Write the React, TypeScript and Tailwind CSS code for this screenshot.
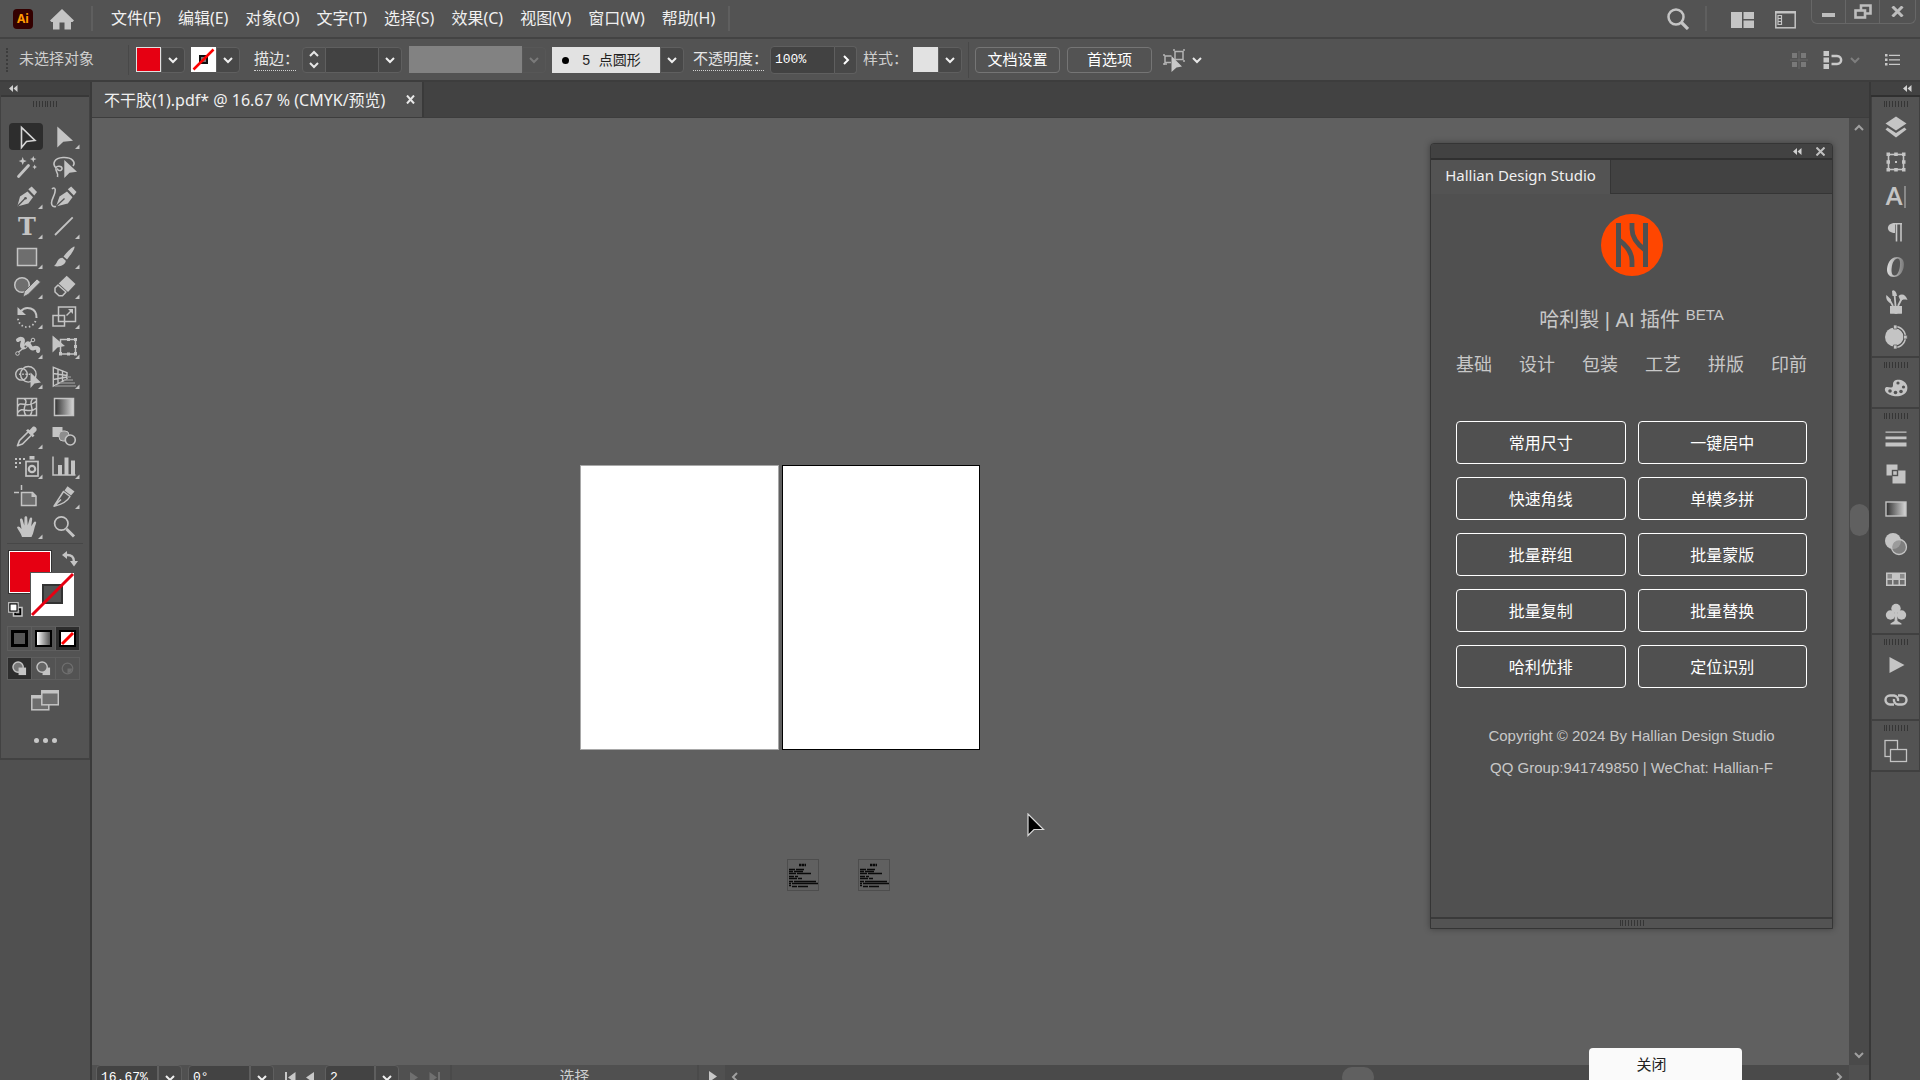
import type { ReactNode } from "react";
import { clsx } from "clsx";

// --- Fonts ---
const UI_FONT = "font-['Noto_Sans','Noto_Sans_CJK_SC',sans-serif]";
const SONG_FONT = "font-['Liberation_Mono','Noto_Sans_CJK_SC',monospace]";
const PLUGIN_FONT = "font-['Liberation_Sans','Noto_Sans_CJK_SC',sans-serif]";

// --- Types ---
type Tool = {
  name: string;
  icon: ReactNode;
  flyout?: boolean;
};

type DockItem = {
  name: string;
  icon: ReactNode;
};

// --- Data ---
const menus = [
  "文件(F)",
  "编辑(E)",
  "对象(O)",
  "文字(T)",
  "选择(S)",
  "效果(C)",
  "视图(V)",
  "窗口(W)",
  "帮助(H)",
];

const pluginTabs = ["基础", "设计", "包装", "工艺", "拼版", "印前"];

const pluginActions = [
  "常用尺寸",
  "一键居中",
  "快速角线",
  "单模多拼",
  "批量群组",
  "批量蒙版",
  "批量复制",
  "批量替换",
  "哈利优排",
  "定位识别",
];

// Tool glyphs are drawn on a 34x27 cell
const tools: Tool[] = [
  {
    name: "选择工具",
    icon: (
      <path d="M12.5 4.5V24.5L17.5 18.5L26 17.5Z" fill="none" stroke="#d6d6d6" strokeWidth="1.6" />
    ),
  },
  {
    name: "直接选择工具",
    flyout: true,
    icon: <path d="M11.3 3.5V24.5L17.3 18.7L27 17.7Z" />,
  },
  {
    name: "魔棒工具",
    icon: (
      <>
        <path d="M9.5 23.5L19.5 12.5" stroke="#c4c4c4" strokeWidth="2.8" strokeLinecap="round" />
        <path d="M13.7 4L14.8 7L17.7 8L14.8 9.200L13.7 12L12.600 9.200L9.700 8L12.600 7Z" />
        <path d="M24.300 3L25.200 5.200L27.500 6L25.200 7L24.300 9.500L23.300 7L21 6L23.300 5.200Z" />
        <path d="M25.700 11.500L26.400 13.300L28 14L26.400 14.800L25.700 16.500L24.900 14.800L23.300 14L24.900 13.300Z" />
      </>
    ),
  },
  {
    name: "套索工具",
    icon: (
      <>
        <path
          d="M10 15C6 11 8 5 17 4.500C26 4 30 9 27 13M10 15C10 12.500 16 12.500 16 15.500C16 18.500 10.500 18 12 15.500M10 15C9 20 13 19 11.500 24"
          fill="none"
          stroke="#c4c4c4"
          strokeWidth="1.6"
        />
        <path d="M18.300 7V25L23.500 19.800L31 18.800Z" />
      </>
    ),
  },
  {
    name: "钢笔工具",
    flyout: true,
    icon: (
      <>
        <path d="M8.300 23.500L11 13.500L18.500 8.500L24 14.300L19.300 20.500Z" />
        <path d="M19.300 6.300L22.700 3.500L28 9L25.300 12.500Z" />
        <path d="M8.300 23.500L16 15.500" stroke="#535353" strokeWidth="1.300" />
        <circle cx="16.500" cy="15.200" r="1.300" fill="#535353" />
      </>
    ),
  },
  {
    name: "曲率工具",
    icon: (
      <>
        <path d="M10 23.500L13.500 13.500L21 8.500L26.500 14.300L21.800 20.500Z" />
        <path d="M21.800 6.300L25.200 3.500L30.500 9L27.800 12.500Z" />
        <path d="M10 23.500L18.500 15.500" stroke="#535353" strokeWidth="1.300" />
        <path
          d="M6 6C8 4 10 5 9 9C8.500 13 5.500 16 5.500 20C5.500 23 7.500 24 10 23.500"
          fill="none"
          stroke="#c4c4c4"
          strokeWidth="1.600"
        />
      </>
    ),
  },
  {
    name: "文字工具",
    flyout: true,
    icon: (
      <text x="18" y="22" textAnchor="middle" className="font-['DejaVu_Serif',serif] text-2xl font-bold">
        T
      </text>
    ),
  },
  {
    name: "直线段工具",
    flyout: true,
    icon: <path d="M9 22L26.700 4.300" stroke="#c4c4c4" strokeWidth="1.800" />,
  },
  {
    name: "矩形工具",
    flyout: true,
    icon: <rect x="8.500" y="5.500" width="19" height="17" fill="#6e6e6e" stroke="#c4c4c4" strokeWidth="1.500" />,
  },
  {
    name: "画笔工具",
    flyout: true,
    icon: (
      <>
        <path d="M28.500 3.500C29 4.500 27 9 21 16.500L17.500 13.500C22 8 26 4 28.500 3.500Z" />
        <path d="M16.500 14.700L19.800 17.700C19.500 21.500 14 24.500 8 23C11.500 20.500 11 15 16.500 14.700Z" />
      </>
    ),
  },
  {
    name: "Shaper 工具",
    flyout: true,
    icon: (
      <>
        <circle cx="13" cy="12" r="7.300" fill="#6e6e6e" stroke="#c4c4c4" strokeWidth="1.500" />
        <path d="M14 24L15.500 18.500L28 6L31.500 9L19 21.500Z" stroke="#535353" strokeWidth="0.800" />
      </>
    ),
  },
  {
    name: "橡皮擦工具",
    flyout: true,
    icon: (
      <>
        <path d="M20.700 2.700L29.500 11L22 19L12.700 10.500Z" />
        <path
          d="M12 12L20 19L16.500 22.700H13L9 19V15Z"
          fill="none"
          stroke="#c4c4c4"
          strokeWidth="1.500"
          strokeLinejoin="round"
        />
      </>
    ),
  },
  {
    name: "旋转工具",
    flyout: true,
    icon: (
      <>
        <path d="M11.500 8.500C17 2 28 5 27.500 15" fill="none" stroke="#c4c4c4" strokeWidth="2" />
        <path d="M8.500 4V12H17Z" />
        <path
          d="M26.500 18A9 9 0 0 1 9 15"
          fill="none"
          stroke="#c4c4c4"
          strokeWidth="1.800"
          strokeDasharray="1.500 2.300"
        />
      </>
    ),
  },
  {
    name: "比例缩放工具",
    flyout: true,
    icon: (
      <>
        <rect x="12.500" y="4" width="17" height="14.500" fill="none" stroke="#c4c4c4" strokeWidth="1.500" />
        <rect x="7" y="12.500" width="11.500" height="10.500" fill="none" stroke="#c4c4c4" strokeWidth="1.500" />
        <path d="M20.500 12.500L25 8" stroke="#c4c4c4" strokeWidth="1.500" />
        <path d="M22 6H27V11Z" />
      </>
    ),
  },
  {
    name: "变形工具",
    flyout: true,
    icon: (
      <>
        <path
          d="M9 7C12 4.500 15 6 13.500 10C11.500 15 15.500 16 17.500 11.500C20 7 20.500 16 24 15.500C27.500 14 30 15 29 18"
          fill="none"
          stroke="#c4c4c4"
          strokeWidth="4"
          strokeLinecap="round"
        />
        <path d="M8.500 20L24 7" stroke="#c4c4c4" strokeWidth="1.300" />
        <circle cx="8.500" cy="20.500" r="1.800" fill="#535353" stroke="#c4c4c4" />
        <circle cx="24" cy="7" r="1.800" fill="#535353" stroke="#c4c4c4" />
        <circle cx="16.500" cy="13.500" r="1.500" fill="#535353" stroke="#c4c4c4" />
      </>
    ),
  },
  {
    name: "自由变换工具",
    flyout: true,
    icon: (
      <>
        <rect x="14.500" y="6.500" width="15" height="14.500" fill="none" stroke="#c4c4c4" strokeWidth="1.500" />
        <path d="M13 19H16V22.500H13ZM28 19H31V22.500H28ZM28 5H31V8H28ZM21 5H24V8H21ZM21 19.500H24V22.500H21ZM28 12H31V15H28Z" />
        <path d="M6.500 2.500V19.500L11.500 14.500L19 13Z" />
      </>
    ),
  },
  {
    name: "形状生成器工具",
    flyout: true,
    icon: (
      <>
        <circle cx="12.500" cy="11.300" r="5.800" fill="none" stroke="#c4c4c4" strokeWidth="1.400" />
        <circle cx="19.300" cy="11.300" r="7.800" fill="none" stroke="#c4c4c4" strokeWidth="1.400" />
        <path d="M10 11.300H23" stroke="#c4c4c4" strokeWidth="1.600" strokeDasharray="1.600 1.600" />
        <path d="M21.500 9.500V25L25.500 20.500L32 19.500Z" />
      </>
    ),
  },
  {
    name: "透视网格工具",
    flyout: true,
    icon: (
      <>
        <path
          d="M7.300 4.300V23L21 16V9.700ZM12 6V20.500M16.500 8V18M7.300 10.500L21 12.500M7.300 16.500L21 14"
          fill="none"
          stroke="#c4c4c4"
          strokeWidth="1.400"
        />
        <path d="M21 14H25M18 17H27M14 20H29M9 23H30" stroke="#8d8d8d" strokeWidth="1.500" />
      </>
    ),
  },
  {
    name: "网格工具",
    icon: (
      <path
        d="M8.500 5.500H27.500V22.500H8.500ZM15 5.500C21 9 11 15 17 22.500M24 5.500C18 11 27 15 21 22.500M8.500 14C11 6 18 17 27.500 8M8.500 20C13 12 20 22 27.500 15"
        fill="none"
        stroke="#c4c4c4"
        strokeWidth="1.500"
      />
    ),
  },
  {
    name: "渐变工具",
    icon: (
      <>
        <defs>
          <linearGradient id="toolGradient">
            <stop offset="0" stopColor="#2f2f2f" />
            <stop offset="1" stopColor="#d8d8d8" />
          </linearGradient>
        </defs>
        <rect x="8.500" y="5.500" width="19" height="17" fill="url(#toolGradient)" stroke="#c4c4c4" strokeWidth="1.500" />
      </>
    ),
  },
  {
    name: "吸管工具",
    flyout: true,
    icon: (
      <>
        <path
          d="M19 9L10.500 17.500L8.500 22.700L13.500 21L22 12.500"
          fill="none"
          stroke="#c4c4c4"
          strokeWidth="1.700"
          strokeLinejoin="round"
        />
        <path d="M17 7.500L19 6L20.500 7.200L23.500 4C25.500 2.500 29 5.500 27.200 8L24 11L25.500 12.500L23.700 14.300Z" />
      </>
    ),
  },
  {
    name: "混合工具",
    icon: (
      <>
        <rect x="6.500" y="4" width="10" height="10" />
        <rect x="13" y="8" width="10" height="10" rx="4" fill="#8d8d8d" stroke="#c4c4c4" />
        <circle cx="24.300" cy="17" r="5" fill="#535353" stroke="#c4c4c4" strokeWidth="1.600" />
      </>
    ),
  },
  {
    name: "符号喷枪工具",
    flyout: true,
    icon: (
      <>
        <path d="M6 5H8V7H6ZM10 5H12V7H10ZM14 5H16V7H14ZM6 9H8V11H6ZM10 9H12V11H10ZM6 13H8V15H6ZM20.500 3H25.500V6.500H20.500Z" />
        <rect x="17" y="8.500" width="12" height="14.500" fill="none" stroke="#c4c4c4" strokeWidth="1.700" />
        <circle cx="23" cy="16" r="3.200" fill="none" stroke="#c4c4c4" strokeWidth="2.200" />
      </>
    ),
  },
  {
    name: "柱形图工具",
    flyout: true,
    icon: (
      <>
        <path d="M7 3.500V22H29.500" fill="none" stroke="#c4c4c4" strokeWidth="1.500" />
        <path d="M12 12H16V22H12ZM18.500 4.500H22.500V22H18.500ZM25 7.500H29V22H25Z" />
      </>
    ),
  },
  {
    name: "画板工具",
    icon: (
      <>
        <path d="M12.500 9.500H23.500L27 13V22.500H12.500Z" fill="#6e6e6e" stroke="#c4c4c4" strokeWidth="1.500" />
        <path d="M22.500 9V14H27.500Z" />
        <path d="M5 9.500H10M12.500 2V7" stroke="#c4c4c4" strokeWidth="1.500" />
      </>
    ),
  },
  {
    name: "切片工具",
    flyout: true,
    icon: (
      <>
        <path
          d="M8 23.200L17.500 8.500L24 13.500C21 19 14 22 8 23.200ZM8 23.200L15 16.500"
          fill="none"
          stroke="#c4c4c4"
          strokeWidth="1.500"
          strokeLinejoin="round"
        />
        <path d="M18.500 7.500L21.500 3.200L28.500 8.500L25 12.500Z" />
      </>
    ),
  },
  {
    name: "抓手工具",
    flyout: true,
    icon: (
      <path d="M13 24C12 20 9.500 17.500 8 14.500C8.500 12.800 10.500 13 12.500 16L11 7C11 5 13.300 5 13.700 7L15.300 12.500L15.500 4.500C15.800 2.800 18 2.800 18.200 4.500L18.700 12.300L20.700 5.500C21.300 3.800 23.400 4.300 23.200 6L22.200 13.300L25 9C26 7.800 27.800 8.700 27 10.500C25 14.500 25 20 22.500 24Z" />
    ),
  },
  {
    name: "缩放工具",
    icon: (
      <>
        <circle cx="15.300" cy="10.500" r="6.700" fill="none" stroke="#c4c4c4" strokeWidth="1.700" />
        <path d="M20.500 16L28 23.500" stroke="#c4c4c4" strokeWidth="3" />
      </>
    ),
  },
];

// Dock glyphs are drawn on a 24x24 cell
const dockGroups: DockItem[][] = [
  [
    {
      name: "图层",
      icon: (
        <>
          <path d="M12 1.500L22.500 8.500L12 15.500L1.500 8.500Z" />
          <path d="M3.500 12.500L12 18L20.500 12.500L22.500 14.500L12 22.500L1.500 14.500Z" />
        </>
      ),
    },
    {
      name: "画板",
      icon: (
        <>
          <rect x="4.500" y="4.500" width="15" height="15" fill="none" stroke="#c4c4c4" strokeWidth="1.600" />
          <path d="M2.500 2.500H6V6H2.500ZM10.200 2.500H13.800V6H10.200ZM18 2.500H21.500V6H18ZM2.500 10.200H6V13.800H2.500ZM18 10.200H21.500V13.800H18ZM2.500 18H6V21.500H2.500ZM10.200 18H13.800V21.500H10.200ZM18 18H21.500V21.500H18ZM11 11H13V13H11Z" />
        </>
      ),
    },
    {
      name: "字符",
      icon: (
        <>
          <text x="10" y="20" textAnchor="middle" className="font-['Lato',sans-serif] text-2xl font-bold">
            A
          </text>
          <path d="M21 1V23" stroke="#a8a8a8" strokeWidth="1.300" />
        </>
      ),
    },
    {
      name: "段落",
      icon: (
        <>
          <path d="M11 3C1.500 3 1.500 13 11 13Z" />
          <path d="M10 3.700H18M12.500 3V21.500M17 3V21.500" fill="none" stroke="#c4c4c4" strokeWidth="1.600" />
        </>
      ),
    },
    {
      name: "OpenType",
      icon: (
        <>
          <defs>
            <linearGradient id="dockRing">
              <stop offset="0" stopColor="#dcdcdc" />
              <stop offset="1" stopColor="#7a7a7a" />
            </linearGradient>
          </defs>
          <path
            d="M13 2C19 2 21 7 19.500 13C18 19 14 22 10 22C4 22 2 17 3.500 11C5 5 9 2 13 2ZM13.500 3.500C11 3.500 8.500 7 7.800 12C7 17 8 20.500 10.500 20.500C13 20.500 15 17 15.800 12C16.500 7 16 3.500 13.500 3.500Z"
            fill="url(#dockRing)"
            fillRule="evenodd"
          />
        </>
      ),
    },
    {
      name: "画笔",
      icon: (
        <>
          <path d="M6 16H18V23.500C18 24 6 24 6 23.500Z" />
          <path d="M9 16L5 9M11.500 16L10.500 4M14 16L18 8" stroke="#c4c4c4" strokeWidth="1.800" />
          <path d="M2.500 5L7 9.500L6 13C3 11 1.500 8 2.500 5ZM8 1C9.500 -1 12.500 1 13 6H8.500ZM14.500 6C18 3 22 5 23.500 10C20 9 18 10 16.500 11Z" />
        </>
      ),
    },
    {
      name: "重新着色",
      icon: (
        <>
          <circle cx="10.500" cy="12" r="9.500" />
          <path d="M11 1.500A10.500 10.500 0 0 1 11 22.500" fill="none" stroke="#535353" strokeWidth="4" />
          <path d="M11 1.500A10.500 10.500 0 0 1 11 22.500" fill="none" stroke="#c4c4c4" strokeWidth="1.500" />
          <circle cx="11" cy="12" r="7.500" />
          <path d="M9.500 0H13V4H9.500ZM9.500 20H13V24H9.500ZM19.500 10.200H23.200V14H19.500Z" stroke="#535353" strokeWidth="0.700" />
        </>
      ),
    },
  ],
  [
    {
      name: "颜色",
      icon: (
        <>
          <path d="M9 8C9 4 13 3 17 4C22 5.500 24.500 10 23 14.500C21.500 19 15 21 9.500 20C4 19 0 15.500 1 12.500C2 10 4.500 11.500 7 11.500C9 11.500 9 10 9 8Z" />
          <g fill="#535353">
            <circle cx="6" cy="15" r="1.800" />
            <circle cx="11.500" cy="16.500" r="1.800" />
            <circle cx="17" cy="15.500" r="1.800" />
            <circle cx="19.500" cy="11" r="1.600" />
            <circle cx="14" cy="7" r="1.600" />
          </g>
        </>
      ),
    },
  ],
  [
    {
      name: "描边",
      icon: <path d="M1.500 4.500H22.500V5.700H1.500ZM1.500 9.500H22.500V12.200H1.500ZM1.500 15.500H22.500V19.500H1.500Z" />,
    },
    {
      name: "路径查找器",
      icon: (
        <>
          <path d="M2.500 2.500H13.500V8.500H21.500V21.500H8.500V13.500H2.500Z" />
          <rect x="8.500" y="8.500" width="5" height="5" fill="#c4c4c4" stroke="#535353" strokeWidth="1.400" />
        </>
      ),
    },
    {
      name: "渐变",
      icon: (
        <>
          <defs>
            <linearGradient id="dockGradient">
              <stop offset="0" stopColor="#2f2f2f" />
              <stop offset="1" stopColor="#d8d8d8" />
            </linearGradient>
          </defs>
          <rect x="2" y="5" width="20" height="14" fill="url(#dockGradient)" stroke="#c4c4c4" strokeWidth="1.400" />
        </>
      ),
    },
    {
      name: "透明度",
      icon: (
        <>
          <circle cx="9" cy="9" r="8" />
          <circle cx="15" cy="15" r="7.500" fill="#8d8d8d" fillOpacity="0.750" stroke="#c4c4c4" strokeWidth="1.300" />
        </>
      ),
    },
    {
      name: "色板",
      icon: (
        <>
          <rect x="2" y="5.500" width="20" height="13.500" />
          <path d="M3.500 7H8V11.500H3.500ZM16 7H20.500V11.500H16Z" fill="#8a8a8a" />
          <path d="M3.500 13H8V17.500H3.500ZM9.500 13H14.500V17.500H9.500ZM16 13H20.500V17.500H16Z" fill="#6e6e6e" />
        </>
      ),
    },
    {
      name: "符号",
      icon: (
        <>
          <circle cx="12" cy="6.500" r="4.700" />
          <circle cx="6.500" cy="13" r="4.700" />
          <circle cx="17.500" cy="13" r="4.700" />
          <path d="M11 9H13L13.500 19L17.500 21.500V22.500H6.500V21.500L10.500 19Z" />
        </>
      ),
    },
  ],
  [
    { name: "动作", icon: <path d="M5.500 4V20L20.500 12Z" /> },
    {
      name: "链接",
      icon: (
        <>
          <path
            d="M10 16.500H6A4.500 4.500 0 0 1 6 7.500H10A4.500 4.500 0 0 1 14 13"
            fill="none"
            stroke="#c4c4c4"
            strokeWidth="2.400"
          />
          <path
            d="M14 7.500H18A4.500 4.500 0 0 1 18 16.500H14A4.500 4.500 0 0 1 10 11"
            fill="none"
            stroke="#c4c4c4"
            strokeWidth="2.400"
          />
        </>
      ),
    },
  ],
  [
    {
      name: "资源导出",
      icon: (
        <>
          <rect x="1" y="1.500" width="12.500" height="16" fill="none" stroke="#c4c4c4" strokeWidth="1.300" />
          <rect x="6.500" y="10.500" width="16" height="12" fill="#535353" stroke="#c4c4c4" strokeWidth="1.300" />
        </>
      ),
    },
  ],
];

// --- Small parts ---
const Chevron = ({ dir = "down", className }: { dir?: "down" | "up" | "left" | "right"; className?: string }) => (
  <svg
    viewBox="0 0 12 12"
    fill="none"
    stroke="currentColor"
    strokeWidth="2"
    className={clsx("size-3 shrink-0", {
      "rotate-180": dir === "up",
      "rotate-90": dir === "left",
      "-rotate-90": dir === "right",
    }, className)}
  >
    <path d="M2 4L6 8L10 4" />
  </svg>
);

const Collapse = () => (
  <svg viewBox="0 0 9 7" className="h-[7px] w-[9px] fill-[#d0d0d0]">
    <path d="M4 0V7L0 3.500ZM8.500 0V7L4.500 3.500Z" />
  </svg>
);

const Grip = ({ className }: { className?: string }) => (
  <div className={clsx("flex h-[6px] w-[24px] justify-between", className)}>
    {Array.from({ length: 9 }, (_, i) => (
      <span key={i} className="w-px bg-[#353535]" />
    ))}
  </div>
);

const Divider = () => <span className="h-[25px] w-[2px] shrink-0 bg-[#5f5f5f]" />;

const DropButton = ({ label, dim }: { label: string; dim?: boolean }) => (
  <button
    aria-label={label}
    className={clsx(
      "flex h-[26px] w-[24px] shrink-0 items-center justify-center rounded-r-sm border",
      dim ? "border-[#575757] text-[#7a7a7a]" : "border-[#5f5f5f] bg-[#484848] text-[#f0f0f0]",
    )}
  >
    <Chevron />
  </button>
);

// --- Top bars ---
const MenuBar = () => (
  <header className="flex h-[39px] shrink-0 items-center border-b-2 border-[#434343] bg-[#535353]">
    <span className="ml-[13px] flex h-[20px] w-[20px] items-center justify-center rounded bg-[#330000] text-xs font-bold text-[#ff9a00]">
      Ai
    </span>
    <button aria-label="主页" className="ml-[17px]">
      <svg viewBox="0 0 24 22" className="h-[22px] w-[24px] fill-[#c4c4c4]">
        <path d="M12 1L24 12.500L22.500 14H21V21.500H14.500V14.500H9.500V21.500H3V14H1.500L0 12.500Z" />
      </svg>
    </button>
    <div className="ml-[17px] flex items-center">
      <Divider />
    </div>
    <nav className="mr-[13px] ml-[18px] flex gap-[17px] pb-[2px] text-base whitespace-nowrap text-[#f0f0f0]">
      {menus.map((menu) => (
        <button key={menu}>{menu}</button>
      ))}
    </nav>
    <Divider />
    <div className="ml-auto flex items-center self-stretch">
      <button aria-label="搜索" className="mr-[16px]">
        <svg viewBox="0 0 22 22" fill="none" stroke="#c4c4c4" className="size-[22px]">
          <circle cx="9" cy="9" r="7.500" strokeWidth="2.500" />
          <path d="M14.500 14.500L21 21" strokeWidth="3.200" />
        </svg>
      </button>
      <Divider />
      <button aria-label="排列文档" className="mt-[3px] ml-[24px]">
        <svg viewBox="0 0 23 16" className="h-[16px] w-[23px] fill-[#c4c4c4]">
          <path d="M0 0H11V16H0ZM12.500 0H23V7H12.500ZM12.500 8.500H23V16H12.500Z" />
        </svg>
      </button>
      <button aria-label="工作区" className="mt-[3px] ml-[21px]">
        <svg viewBox="0 0 21 18" className="h-[18px] w-[21px]" fill="none" stroke="#c4c4c4">
          <rect x="0.800" y="0.800" width="19.400" height="16" strokeWidth="1.500" />
          <path d="M0 1.500H21" strokeWidth="2" />
          <path d="M3 4.500H6.500V13.500H3ZM3 7.500H6.500M3 10.500H6.500" strokeWidth="1.200" />
        </svg>
      </button>
      <div className="mr-[4px] ml-[15px] flex h-[24px] self-start rounded-b-md border border-t-0 border-[#676767] text-[#bdbdbd]">
        <button aria-label="最小化" className="flex w-[34px] items-center justify-center border-r border-[#676767]">
          <svg viewBox="0 0 13 4" className="mt-[6px] h-[4px] w-[13px] fill-current">
            <rect width="13" height="4" />
          </svg>
        </button>
        <button aria-label="还原" className="flex w-[34px] items-center justify-center border-r border-[#676767]">
          <svg viewBox="0 0 18 15" fill="none" stroke="currentColor" className="h-[15px] w-[18px]">
            <path d="M7 6V1.500H16.500V9.500H12" strokeWidth="2.600" />
            <rect x="1.500" y="6.500" width="9.500" height="7" strokeWidth="2.600" />
          </svg>
        </button>
        <button aria-label="关闭窗口" className="flex w-[35px] items-center justify-center">
          <svg viewBox="0 0 13 11" stroke="currentColor" className="h-[11px] w-[13px]">
            <path d="M1.500 0.500L11.500 10.500M11.500 0.500L1.500 10.500" strokeWidth="3" />
          </svg>
        </button>
      </div>
    </div>
  </header>
);

const ControlBar = () => (
  <div
    className={clsx(
      "flex h-[43px] shrink-0 items-center border-b-2 border-[#3d3d3d] bg-[#535353] text-[15px] whitespace-nowrap text-[#e6e6e6]",
      SONG_FONT,
    )}
  >
    <span className="ml-[6px] h-[24px] w-[2px] border-l-2 border-dotted border-[#3c3c3c]" />
    <span className="ml-[11px] w-[109px] pt-[4px] text-[#cfcfcf]">未选择对象</span>
    <span className="mr-[7px] h-[30px] w-px bg-[#484848]" />
    <button aria-label="填色" className="size-[25px] border border-[#e0e0e0] bg-[#e60012]" />
    <DropButton label="填色选项" />
    <button aria-label="描边颜色" className="ml-[6px]">
      <svg viewBox="0 0 25 25" className="size-[25px]">
        <rect width="25" height="25" fill="#fff" />
        <rect x="9" y="9" width="7" height="7" fill="#777" stroke="#111" strokeWidth="2" />
        <path d="M2.500 22.500L22.500 2.500" stroke="#f00" strokeWidth="2.500" />
      </svg>
    </button>
    <DropButton label="描边颜色选项" />
    <label htmlFor="stroke" className="ml-[14px] w-[42px] border-b border-dotted border-[#d0d0d0] pt-[4px] leading-[18px]">
      描边：
    </label>
    <div className="ml-[6px] flex h-[26px] w-[24px] flex-col items-center justify-between rounded-l-sm border border-[#5f5f5f] bg-[#4c4c4c] py-px">
      <button aria-label="增加描边" className="flex h-[11px] items-center"><Chevron dir="up" /></button>
      <button aria-label="减少描边" className="flex h-[11px] items-center"><Chevron /></button>
    </div>
    <input id="stroke" className="h-[26px] w-[52px] border-y border-[#5f5f5f] bg-[#424242]" />
    <DropButton label="描边粗细" />
    <button aria-label="变量宽度配置文件" className="ml-[7px] h-[27px] w-[113px] bg-[#828282]" />
    <DropButton label="宽度选项" dim />
    <div className="relative ml-[6px] flex w-[132px] text-sm text-[#222]">
      <span className="absolute top-[10px] left-[10px] size-[7px] rounded-full bg-black" />
      <select
        aria-label="画笔定义"
        className="h-[26px] w-[108px] appearance-none bg-[#e2e2e2] pt-px pl-[30px] leading-[26px]"
      >
        <option>5 点圆形</option>
      </select>
      <DropButton label="画笔选项" />
    </div>
    <label htmlFor="opacity" className="ml-[9px] w-[71px] border-b border-dotted border-[#d0d0d0] pt-[4px] leading-[18px]">
      不透明度：
    </label>
    <input
      id="opacity"
      defaultValue="100%"
      className="ml-[6px] h-[28px] w-[65px] rounded-l-sm border border-[#5f5f5f] bg-[#424242] pl-[4px] text-[13px] text-white"
    />
    <button
      aria-label="不透明度滑块"
      className="flex h-[28px] w-[22px] items-center justify-center rounded-r-sm border border-l-0 border-[#5f5f5f] bg-[#484848] text-white"
    >
      <Chevron dir="right" />
    </button>
    <span className="ml-[6px] w-[50px] pt-[4px] text-[#cfcfcf]">样式：</span>
    <button aria-label="图形样式" className="size-[25px] bg-[#e2e2e2]" />
    <DropButton label="样式选项" />
    <span className="mx-[6px] h-[36px] w-px bg-[#484848]" />
    <button className="h-[26px] w-[85px] rounded-sm border border-[#757575] pt-[4px] leading-[20px] text-white">文档设置</button>
    <button className="ml-[7px] h-[26px] w-[85px] rounded-sm border border-[#757575] pt-[4px] leading-[20px] text-white">首选项</button>
    <button aria-label="选择相似对象" className="ml-[11px] flex items-center gap-[6px] text-[#e8e8e8]">
      <svg viewBox="0 0 22 24" className="h-[24px] w-[22px]" fill="none" stroke="#b4b4b4">
        <rect x="12" y="3.500" width="8" height="8" strokeWidth="1.500" />
        <path d="M10 2H12M20 2H22M20 13H22M1 16H4" strokeWidth="1.500" />
        <path d="M8 14.500H2V8H8.500M0 7H2M0 16H2" strokeWidth="1.500" />
        <path d="M8.500 8L19 18.500L13.500 19.500L8.500 24Z" fill="#c8c8c8" stroke="none" />
      </svg>
      <Chevron />
    </button>
    <div className="mr-[20px] ml-auto flex items-center">
      <svg viewBox="0 0 18 18" className="size-[18px]" fill="#797979">
        <path d="M2 2H7V7H2ZM11 2H16V7H11ZM2 11H7V16H2ZM11 11H16V16H11Z" />
        <path d="M9 0V18M0 9H18" stroke="#686868" />
      </svg>
      <button aria-label="对齐像素" className="ml-[15px] flex items-center gap-[6px] text-[#7e7e7e]">
        <svg viewBox="0 0 20 20" className="size-[20px]" fill="#c8c8c8">
          <path d="M0.500 1H6V6H0.500ZM0.500 7.500H6V12.500H0.500ZM0.500 14H6V19H0.500Z" />
          <path d="M8.500 6H14C19.500 6 19.500 14 14 14H8.500" fill="none" stroke="#c8c8c8" strokeWidth="2.500" />
        </svg>
        <Chevron />
      </button>
      <button aria-label="控制面板菜单" className="ml-[24px]">
        <svg viewBox="0 0 15 12" className="h-[12px] w-[15px]" fill="#c8c8c8">
          <path d="M0 0H2.500V2.500H0ZM0 4.500H2.500V7H0ZM0 9H2.500V11.500H0ZM4 0.700H15V2H4ZM4 5.200H15V6.500H4ZM4 9.700H15V11H4Z" />
        </svg>
      </button>
    </div>
  </div>
);

// --- Left toolbox ---
const Toolbox = () => (
  <aside className="w-[92px] shrink-0 border-r-2 border-[#3a3a3a] bg-[#505050]">
    <div className="border-x border-b-2 border-[#424242] bg-[#535353]">
      <div className="flex h-[15px] items-center border-b-2 border-[#383838] bg-[#424242] pl-[8px]">
        <Collapse />
      </div>
      <div className="flex justify-center pt-[4px]">
        <Grip />
      </div>
      <div className="mt-[16px] ml-[8px] grid w-[71px] grid-cols-2 gap-x-[3px] gap-y-[3px]">
        {tools.map((tool, i) => (
          <button
            key={tool.name}
            aria-label={tool.name}
            className={clsx("h-[27px] w-[34px] rounded-sm", i === 0 && "bg-[#2d2d2d]")}
          >
            <svg viewBox="0 0 34 27" className="h-[27px] w-[34px] fill-[#c4c4c4]">
              {tool.icon}
              {tool.flyout && <path d="M33.500 21.500V26H29Z" />}
            </svg>
          </button>
        ))}
      </div>
      <div className="mx-[6px] mt-[3px] h-px bg-[#474747]" />
      <div className="relative mt-[6px] ml-[7px] h-[67px] w-[71px]">
        <button aria-label="填色" className="absolute top-0 left-0 size-[44px] border border-[#333] bg-[#e60012] outline-1 -outline-offset-2 outline-white" />
        <button aria-label="描边" className="absolute top-[22px] left-[22px]">
          <svg viewBox="0 0 45 45" className="size-[45px]">
            <rect width="45" height="45" fill="#535353" />
            <rect x="1" y="1" width="43" height="43" fill="#fff" />
            <rect x="13" y="13" width="19" height="18" fill="#535353" stroke="#333" strokeWidth="2" />
            <path d="M2 43L43 2" stroke="#e60012" strokeWidth="3" />
          </svg>
        </button>
        <button aria-label="互换填色和描边" className="absolute top-[1px] left-[54px]">
          <svg viewBox="0 0 16 16" className="size-[16px] fill-[#c4c4c4]">
            <path d="M5 0V8L0 4ZM8 10H16L12 15.500Z" />
            <path d="M4 4C9.500 3.500 12 6 12 11" fill="none" stroke="#c4c4c4" strokeWidth="2.500" />
          </svg>
        </button>
        <button aria-label="默认填色和描边" className="absolute top-[52px] left-0">
          <svg viewBox="0 0 15 15" className="size-[15px]">
            <rect x="5.500" y="5.500" width="8.500" height="8.500" fill="#000" stroke="#c8c8c8" strokeWidth="1.500" />
            <rect x="8" y="8" width="3.500" height="3.500" fill="#777" />
            <rect x="0.700" y="0.700" width="9.500" height="9.500" fill="#000" stroke="#c8c8c8" strokeWidth="1.200" />
            <rect x="2.500" y="2.500" width="6" height="6" fill="#fff" />
          </svg>
        </button>
      </div>
      <div className="mt-[9px] ml-[6px] flex h-[25px] w-[73px] border border-[#5e5e5e]">
        <button aria-label="颜色" className="flex flex-1 items-center justify-center border-r border-[#5e5e5e]">
          <span className="size-[17px] border-[3px] border-black bg-[#555]" />
        </button>
        <button aria-label="渐变" className="flex flex-1 items-center justify-center border-r border-[#5e5e5e]">
          <span className="size-[17px] border-2 border-black bg-linear-to-r from-white to-[#555]" />
        </button>
        <button aria-label="无" className="flex flex-1 items-center justify-center bg-[#2d2d2d]">
          <svg viewBox="0 0 17 17" className="size-[17px]">
            <rect x="1" y="1" width="15" height="15" fill="#fff" stroke="#000" strokeWidth="2" />
            <path d="M3 14L14 3" stroke="#f00" strokeWidth="3" />
          </svg>
        </button>
      </div>
      <div className="mt-[6px] ml-[6px] flex h-[23px] w-[73px] border border-[#5e5e5e]">
        <button aria-label="正常绘图" className="flex flex-1 items-center justify-center bg-[#2d2d2d]">
          <svg viewBox="0 0 16 16" className="size-[15px]">
            <circle cx="6.500" cy="6.500" r="5.500" fill="#777" stroke="#c4c4c4" strokeWidth="1.500" />
            <rect x="7" y="7" width="8" height="8" fill="#c4c4c4" />
          </svg>
        </button>
        <button aria-label="背面绘图" className="flex flex-1 items-center justify-center border-x border-[#5e5e5e]">
          <svg viewBox="0 0 16 16" className="size-[15px]">
            <rect x="7" y="7" width="8" height="8" fill="#c4c4c4" />
            <circle cx="6.500" cy="6.500" r="5.500" fill="#666" stroke="#c4c4c4" strokeWidth="1.500" />
          </svg>
        </button>
        <button aria-label="内部绘图" className="flex flex-1 items-center justify-center">
          <svg viewBox="0 0 16 16" className="size-[13px]">
            <circle cx="8" cy="8" r="6.500" fill="none" stroke="#6e6e6e" strokeWidth="1.500" />
            <path d="M8 8H13.500A5.500 5.500 0 0 1 8 13.500Z" fill="#6e6e6e" />
          </svg>
        </button>
      </div>
      <button aria-label="更改屏幕模式" className="mx-auto mt-[10px] flex">
        <svg viewBox="0 0 28 21" className="h-[21px] w-[28px]">
          <rect x="0.800" y="5.800" width="17" height="14" fill="#6e6e6e" stroke="#c4c4c4" strokeWidth="1.500" />
          <path d="M0.500 7H10" stroke="#c4c4c4" strokeWidth="3" />
          <rect x="10.800" y="0.800" width="16.500" height="14" fill="#6e6e6e" stroke="#c4c4c4" strokeWidth="1.500" />
          <path d="M10.500 2H28" stroke="#c4c4c4" strokeWidth="3" />
        </svg>
      </button>
      <button aria-label="编辑工具栏" className="mx-auto mt-[27px] mb-[15px] flex gap-[4px]">
        <span className="size-[5px] rounded-full bg-[#c8c8c8]" />
        <span className="size-[5px] rounded-full bg-[#c8c8c8]" />
        <span className="size-[5px] rounded-full bg-[#c8c8c8]" />
      </button>
    </div>
  </aside>
);

// --- Right dock ---
const Dock = () => (
  <aside className="w-[51px] shrink-0 border-l-2 border-[#383838] bg-[#505050]">
    <div className="flex h-[15px] items-center justify-end border-b-2 border-[#303030] bg-[#424242] pr-[8px]">
      <Collapse />
    </div>
    {dockGroups.map((group) => (
      <div
        key={group[0].name}
        className="flex flex-col items-center border-x border-b-2 border-[#404040] bg-[#535353] pt-[4px]"
      >
        <Grip className="mb-[2px]" />
        {group.map((item) => (
          <button key={item.name} aria-label={item.name} className="flex h-[35px] items-center">
            <svg viewBox="0 0 24 24" className="size-[24px] overflow-visible fill-[#c4c4c4]">
              {item.icon}
            </svg>
          </button>
        ))}
        <span className="h-[2px]" />
      </div>
    ))}
  </aside>
);

// --- Floating plugin panel ---
const PluginPanel = () => (
  <section className="absolute top-[25px] right-[16px] w-[403px] rounded-t border border-[#353535] bg-[#505050] shadow-[0_0_6px_rgba(0,0,0,0.35)]">
    <div className="flex h-[16px] items-center justify-end gap-[14px] rounded-t border-b-2 border-[#303030] bg-[#424242] pr-[7px]">
      <Collapse />
      <button aria-label="关闭面板">
        <svg viewBox="0 0 9 9" className="size-[9px]" stroke="#c0c0c0" strokeWidth="2">
          <path d="M0.500 0.500L8.500 8.500M8.500 0.500L0.500 8.500" />
        </svg>
      </button>
    </div>
    <div className="flex h-[34px] bg-[#424242]">
      <button className="w-[179px] bg-[#535353] pb-[4px] text-[15px] whitespace-nowrap text-[#f0f0f0]">
        Hallian Design Studio
      </button>
      <span className="flex-1 border-b border-l border-[#353535]" />
    </div>
    <div className={clsx("flex h-[723px] flex-col px-[25px] text-[#c8c8c8]", PLUGIN_FONT)}>
      <svg viewBox="0 0 62 62" className="mx-auto mt-[20px] size-[62px] shrink-0">
        <circle cx="31" cy="31" r="31" fill="#ff4600" />
        <g fill="none" stroke="#505050">
          <path d="M17.500 9V53M44.500 9V53" strokeWidth="5" />
          <path d="M31 9V15C31 24 36 30 44 36M18 26C26 32 31 38 31 47V53" strokeWidth="4.800" />
        </g>
      </svg>
      <h1 className="mt-[28px] text-center text-xl leading-[32px]">
        哈利製 | AI 插件 <sup className="text-[15px]">BETA</sup>
      </h1>
      <nav className="mt-[15px] flex justify-between text-lg leading-[28px]">
        {pluginTabs.map((tab) => (
          <a key={tab} href="#">
            {tab}
          </a>
        ))}
      </nav>
      <div className="mt-[42px] grid grid-cols-2 gap-x-[12px] gap-y-[13px] text-base text-white">
        {pluginActions.map((action) => (
          <button key={action} className="h-[43px] rounded border border-white pt-[2px]">
            {action}
          </button>
        ))}
      </div>
      <footer className="mt-[32px] text-center text-[15px] leading-[32px]">
        <p>Copyright © 2024 By Hallian Design Studio</p>
        <p>QQ Group:941749850 | WeChat: Hallian-F</p>
      </footer>
    </div>
    <div className="flex h-[11px] justify-center border-t-2 border-[#3a3a3a] bg-[#535353] pt-px">
      <Grip />
    </div>
  </section>
);

// Tiny text block placed below the artboards
const NoteThumb = ({ className }: { className: string }) => (
  <svg viewBox="0 0 32 32" className={clsx("absolute size-[32px]", className)} fill="none" stroke="#0a0a0a">
    <rect x="0.500" y="0.500" width="31" height="31" stroke="#4d4d4d" />
    <path d="M12 6H19" strokeWidth="2.300" strokeDasharray="2.500 0.500" />
    <path
      d="M2 10.500H8M9 10.500H17M2 12.500H6M7 12.500H16M2 14.500H9M10 14.500H24M2 17.500H7M8 17.500H11M2 19.500H10M11 19.500H15M2 26.500H4M5 27.500H10M11 27.500H21"
      strokeWidth="1.400"
    />
    <path d="M2 22.500H6M7 22.500H29M2 24.500H4M5 24.500H31" strokeWidth="1.600" />
  </svg>
);

// --- Document area ---
const Canvas = () => (
  <div className="relative min-w-0 flex-1 overflow-hidden bg-[#606060]">
    <div className="absolute top-[347px] left-[488px] h-[285px] w-[199px] border border-[#a8a8a8] bg-white" />
    <div className="absolute top-[347px] left-[690px] h-[285px] w-[198px] border border-black bg-white" />
    <NoteThumb className="top-[741px] left-[695px]" />
    <NoteThumb className="top-[741px] left-[766px]" />
    <svg viewBox="0 0 18 24" className="absolute top-[695px] left-[935px] h-[24px] w-[18px]">
      <path d="M1 1V22.500L7 16.500H16.500Z" fill="#000" stroke="#d8d8d8" strokeWidth="1.200" />
    </svg>
    <PluginPanel />
  </div>
);

const statusInput = "h-[24px] rounded-l-sm border border-[#5f5f5f] bg-[#434343] pl-[4px] text-[13px] text-white";

const StatusBar = () => (
  <div className={clsx("flex h-[15px] shrink-0 items-start overflow-hidden bg-[#505050] text-[15px] text-[#cfcfcf]", SONG_FONT)}>
    <input aria-label="缩放" defaultValue="16.67%" className={clsx("ml-[4px] w-[62px]", statusInput)} />
    <DropButton label="缩放级别" />
    <input aria-label="旋转" defaultValue="0°" className={clsx("ml-[6px] w-[62px]", statusInput)} />
    <DropButton label="旋转角度" />
    <div className="ml-[11px] flex h-[24px] items-center gap-[10px]">
      <svg viewBox="0 0 11 11" className="size-[11px] fill-[#c8c8c8]">
        <path d="M0 0H2V11H0ZM10.500 0V11L3 5.500Z" />
      </svg>
      <svg viewBox="0 0 8 11" className="h-[11px] w-[8px] fill-[#c8c8c8]">
        <path d="M8 0V11L0 5.500Z" />
      </svg>
    </div>
    <input aria-label="画板" defaultValue="2" className={clsx("ml-[11px] w-[50px]", statusInput)} />
    <DropButton label="画板导航" />
    <div className="ml-[11px] flex h-[24px] items-center gap-[11px]">
      <svg viewBox="0 0 8 11" className="h-[11px] w-[8px] fill-[#707070]">
        <path d="M0 0V11L8 5.500Z" />
      </svg>
      <svg viewBox="0 0 11 11" className="size-[11px] fill-[#707070]">
        <path d="M9 0H11V11H9ZM0.500 0V11L8 5.500Z" />
      </svg>
    </div>
    <div className="ml-[10px] flex w-[249px] justify-center border-x-2 border-[#4a4a4a] pt-[4px]">
      <span className="leading-[20px]">选择</span>
    </div>
    <svg viewBox="0 0 8 11" className="mt-[6px] ml-[10px] h-[11px] w-[8px] fill-[#c8c8c8]">
      <path d="M0 0V11L8 5.500Z" />
    </svg>
    <div className="mr-[20px] ml-[8px] flex h-[24px] flex-1 items-center justify-between bg-[#4a4a4a] px-[4px] text-[#a0a0a0]">
      <Chevron dir="left" />
      <span className="ml-[141px] h-[20px] w-[32px] rounded-full bg-[#606060]" />
      <Chevron dir="right" />
    </div>
  </div>
);

export default function App() {
  return (
    <div className={clsx("relative flex h-screen flex-col overflow-hidden bg-[#535353]", UI_FONT)}>
      <MenuBar />
      <ControlBar />
      <div className="flex min-h-0 flex-1">
        <Toolbox />
        <main className="flex min-w-0 flex-1 flex-col">
          <div className="flex h-[36px] shrink-0 border-b border-[#3d3d3d] bg-[#424242]">
            <div className="flex w-[332px] items-center justify-between border-r-2 border-[#3a3a3a] bg-[#535353] pr-[7px] pl-[12px] text-base whitespace-nowrap text-[#f0f0f0]">
              <span>不干胶(1).pdf* @ 16.67 % (CMYK/预览)</span>
              <button aria-label="关闭文档">
                <svg viewBox="0 0 9 9" className="size-[9px]" stroke="#e8e8e8" strokeWidth="2">
                  <path d="M1 0.500L8 8.500M8 0.500L1 8.500" />
                </svg>
              </button>
            </div>
          </div>
          <div className="flex min-h-0 flex-1">
            <Canvas />
            <div className="flex w-[20px] shrink-0 flex-col items-center justify-between bg-[#4a4a4a] py-[4px] text-[#a0a0a0]">
              <Chevron dir="up" />
              <span className="mb-[144px] h-[32px] w-[19px] rounded-full bg-[#606060]" />
              <Chevron />
            </div>
          </div>
          <StatusBar />
        </main>
        <Dock />
      </div>
      {/* Recorder toast */}
      <button className="absolute bottom-0 left-[1589px] h-[32px] w-[153px] rounded-t bg-[#fafafa] pr-[28px] text-[15px] text-[#222]">
        关闭
      </button>
    </div>
  );
}
